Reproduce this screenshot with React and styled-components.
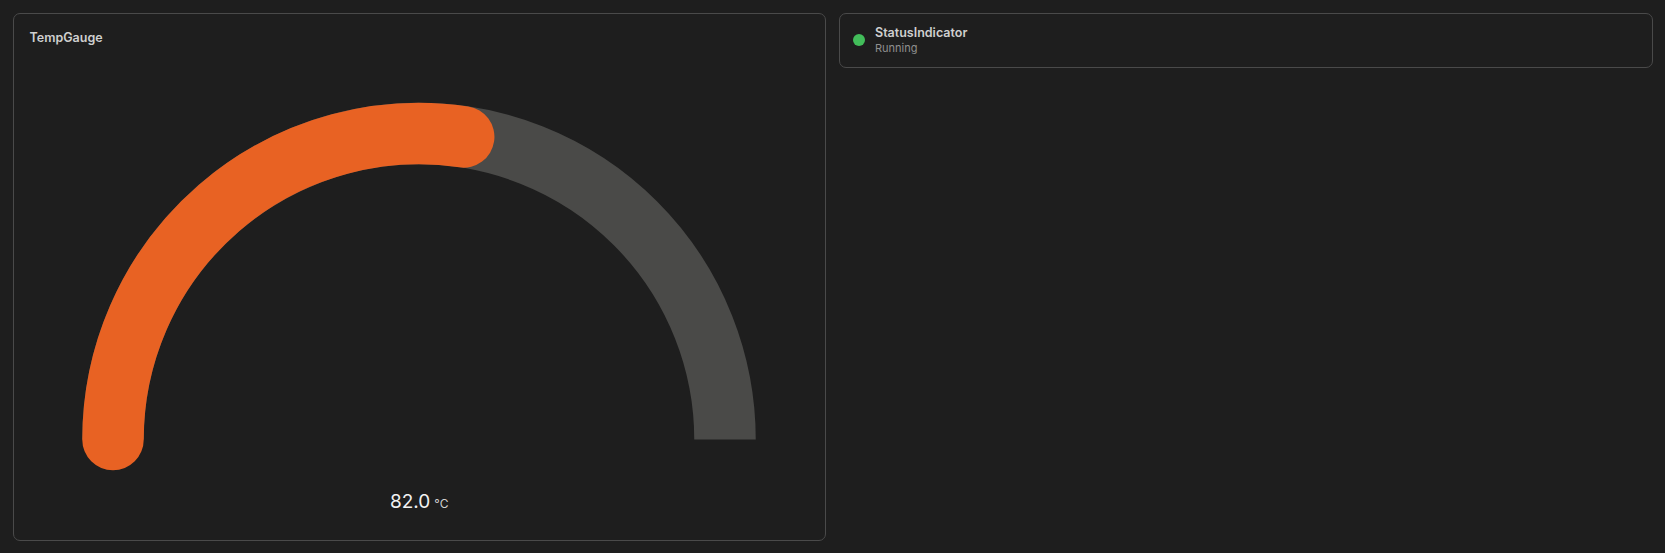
import React from "react";
import styled, { createGlobalStyle } from "styled-components";

const Global = createGlobalStyle`
  html, body { margin: 0; padding: 0; background: #1e1e1e; }
  body { font-family: Inter, "Noto Sans", sans-serif; }
`;

const Page = styled.div`
  box-sizing: border-box;
  height: 553px;
  padding: 12.5px 12.5px;
  display: grid;
  grid-template-columns: 1fr 1fr;
  gap: 13px;
  align-items: start;
`;

const Card = styled.div`
  box-sizing: border-box;
  border: 1px solid #4a4a4a;
  border-radius: 7px;
  background: #1e1e1e;
  height: ${(p) => p.$h}px;
`;

const GaugeCard = styled(Card)`
  display: flex;
  flex-direction: column;
  align-items: center;
  padding: 16px 16px;
`;

const Title = styled.div`
  align-self: flex-start;
  color: #cfcfcf;
  font-size: 12.5px;
  font-weight: 600;
  line-height: 16px;
`;

const GaugeSvg = styled.svg`
  margin-top: 45px;
  display: block;
`;

const Value = styled.div`
  margin-top: 14px;
  color: #f2f2f2;
  font-size: 19px;
  line-height: 24px;
  display: flex;
  align-items: baseline;
  gap: 4px;
`;

const Unit = styled.span`
  font-size: 12px;
  color: #cfcfcf;
`;

const StatusCard = styled(Card)`
  display: flex;
  align-items: center;
  gap: 10px;
  padding: 0 13px;
`;

const Dot = styled.span`
  width: 12px;
  height: 12px;
  border-radius: 50%;
  background: #42bd5a;
  flex: none;
`;

const StatusText = styled.div`
  display: flex;
  flex-direction: column;
`;

const StatusTitle = styled.div`
  color: #cfcfcf;
  font-size: 12.5px;
  font-weight: 600;
  line-height: 16px;
`;

const StatusSub = styled.div`
  color: #8f8f8f;
  font-size: 11px;
  line-height: 14px;
`;

export default function App() {
  const cx = 345, cy = 348.6, r = 306;
  const frac = 82 / 150;
  const a = Math.PI - frac * Math.PI;
  const ex = cx + r * Math.cos(a);
  const ey = cy - r * Math.sin(a);
  return (
    <>
      <Global />
      <Page>
        <GaugeCard $h={528}>
          <Title>TempGauge</Title>
          <GaugeSvg width="690" height="385" viewBox="0 0 690 385">
            <path
              d={`M ${cx - r} ${cy} A ${r} ${r} 0 0 1 ${cx + r} ${cy}`}
              fill="none"
              stroke="#4a4a48"
              strokeWidth="61.5"
            />
            <path
              d={`M ${cx - r} ${cy} A ${r} ${r} 0 0 1 ${ex} ${ey}`}
              fill="none"
              stroke="#e86223"
              strokeWidth="61.5"
              strokeLinecap="round"
            />
          </GaugeSvg>
          <Value>
            82.0<Unit>°C</Unit>
          </Value>
        </GaugeCard>
        <StatusCard $h={55}>
          <Dot />
          <StatusText>
            <StatusTitle>StatusIndicator</StatusTitle>
            <StatusSub>Running</StatusSub>
          </StatusText>
        </StatusCard>
      </Page>
    </>
  );
}
